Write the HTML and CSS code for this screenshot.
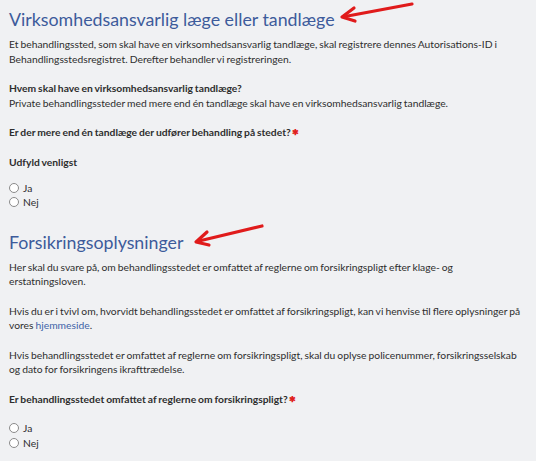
FILE: index.html
```html
<!DOCTYPE html>
<html lang="da">
<head>
<meta charset="utf-8">
<link rel="stylesheet" href="styles.css">
</head>
<body>
<main class="page">
  <section class="section">
    <h2 class="title">Virksomhedsansvarlig læge eller tandlæge</h2>
    <p class="text">Et behandlingssted, som skal have en virksomhedsansvarlig tandlæge, skal registrere dennes Autorisations-ID i Behandlingsstedsregistret. Derefter behandler vi registreringen.</p>
    <p class="text"><strong>Hvem skal have en virksomhedsansvarlig tandlæge?</strong><br>Private behandlingssteder med mere end én tandlæge skal have en virksomhedsansvarlig tandlæge.</p>
    <p class="question">Er der mere end én tandlæge der udfører behandling på stedet?<span class="req">✱</span></p>
    <p class="question short">Udfyld venligst</p>
    <div class="radios">
      <label class="radio"><span class="circle"></span>Ja</label>
      <label class="radio"><span class="circle"></span>Nej</label>
    </div>
  </section>
  <section class="section second">
    <h2 class="title">Forsikringsoplysninger</h2>
    <p class="text">Her skal du svare på, om behandlingsstedet er omfattet af reglerne om forsikringspligt efter klage- og erstatningsloven.</p>
    <p class="text">Hvis du er i tvivl om, hvorvidt behandlingsstedet er omfattet af forsikringspligt, kan vi henvise til flere oplysninger på vores <a class="link" href="#">hjemmeside</a>.</p>
    <p class="text">Hvis behandlingsstedet er omfattet af reglerne om forsikringspligt, skal du oplyse policenummer, forsikringsselskab og dato for forsikringens ikrafttrædelse.</p>
    <p class="question">Er behandlingsstedet omfattet af reglerne om forsikringspligt?<span class="req">✱</span></p>
    <div class="radios">
      <label class="radio"><span class="circle"></span>Ja</label>
      <label class="radio"><span class="circle"></span>Nej</label>
    </div>
  </section>
</main>
<svg class="arrow arrow1" width="80" height="24" viewBox="0 0 80 24"><path d="M74 4 L7 16.5" stroke="#e01b1b" stroke-width="3.2" stroke-linecap="round" fill="none"/><path d="M16 8 L4 17 L17 21" stroke="#e01b1b" stroke-width="3.2" stroke-linecap="round" stroke-linejoin="round" fill="none"/></svg>
<svg class="arrow arrow2" width="80" height="26" viewBox="0 0 80 26"><path d="M70 4 L7 19" stroke="#e01b1b" stroke-width="3.2" stroke-linecap="round" fill="none"/><path d="M15 10 L4 20 L17 23" stroke="#e01b1b" stroke-width="3.2" stroke-linecap="round" stroke-linejoin="round" fill="none"/></svg>
</body>
</html>
```
FILE: styles.css
```css
html, body {
  margin: 0;
  padding: 0;
  background: #f0f1f3;
}
body {
  position: relative;
  width: 536px;
  height: 461px;
  overflow: hidden;
  font-family: Lato, "Open Sans", sans-serif;
  color: #2e2e2e;
  font-size: 10.3px;
  line-height: 14.5px;
  word-spacing: -0.6px;
}
.page {
  padding: 7px 12px 0 9px;
}
.title {
  margin: 0 0 6px 0;
  font-weight: 400;
  font-size: 17.8px;
  line-height: 24px;
  color: #3d5b9b;
  word-spacing: 0;
}
.text {
  margin: 0 0 15px 0;
}
.question {
  margin: 0 0 15px 0;
  font-weight: 700;
}
.question.short {
  margin-bottom: 11.5px;
}
.req {
  color: #e02020;
  font-size: 8px;
  margin-left: 1px;
  vertical-align: 1px;
}
.link {
  color: #3e63a8;
  text-decoration: none;
}
.radios {
  display: flex;
  flex-direction: column;
}
.radio {
  display: flex;
  align-items: center;
  gap: 4px;
  height: 14.5px;
}
.circle {
  width: 8px;
  height: 8px;
  border: 1px solid #8a8a8a;
  border-radius: 50%;
  background: #fff;
}
.second {
  margin-top: 20px;
}
.arrow {
  position: absolute;
}
.arrow1 {
  left: 338px;
  top: 0;
}
.arrow2 {
  left: 192px;
  top: 222px;
}
```
